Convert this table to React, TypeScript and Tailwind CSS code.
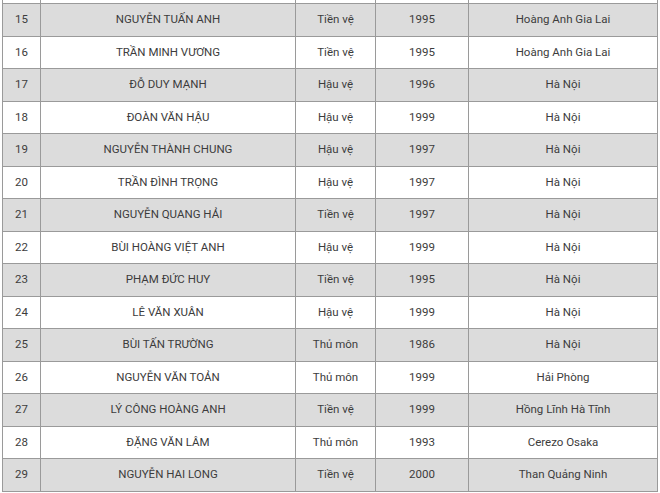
import React from 'react';

const rows: [number, string, string, number, string][] = [
  [14, '', '', 0, ''],
  [15, 'NGUYỄN TUẤN ANH', 'Tiền vệ', 1995, 'Hoàng Anh Gia Lai'],
  [16, 'TRẦN MINH VƯƠNG', 'Tiền vệ', 1995, 'Hoàng Anh Gia Lai'],
  [17, 'ĐỖ DUY MẠNH', 'Hậu vệ', 1996, 'Hà Nội'],
  [18, 'ĐOÀN VĂN HẬU', 'Hậu vệ', 1999, 'Hà Nội'],
  [19, 'NGUYỄN THÀNH CHUNG', 'Hậu vệ', 1997, 'Hà Nội'],
  [20, 'TRẦN ĐÌNH TRỌNG', 'Hậu vệ', 1997, 'Hà Nội'],
  [21, 'NGUYỄN QUANG HẢI', 'Tiền vệ', 1997, 'Hà Nội'],
  [22, 'BÙI HOÀNG VIỆT ANH', 'Hậu vệ', 1999, 'Hà Nội'],
  [23, 'PHẠM ĐỨC HUY', 'Tiền vệ', 1995, 'Hà Nội'],
  [24, 'LÊ VĂN XUÂN', 'Hậu vệ', 1999, 'Hà Nội'],
  [25, 'BÙI TẤN TRƯỜNG', 'Thủ môn', 1986, 'Hà Nội'],
  [26, 'NGUYỄN VĂN TOẢN', 'Thủ môn', 1999, 'Hải Phòng'],
  [27, 'LÝ CÔNG HOÀNG ANH', 'Tiền vệ', 1999, 'Hồng Lĩnh Hà Tĩnh'],
  [28, 'ĐẶNG VĂN LÂM', 'Thủ môn', 1993, 'Cerezo Osaka'],
  [29, 'NGUYỄN HAI LONG', 'Tiền vệ', 2000, 'Than Quảng Ninh'],
];

export default function App() {
  return (
    <div className="w-[660px] h-[493px] overflow-hidden bg-white">
      <div className="pl-[2px] -mt-[29.5px]">
        <table
          className="table-fixed border-collapse w-[655px] text-[11.5px] text-[#3c3c3c] text-center"
          style={{ fontFamily: 'Roboto, "Noto Sans", sans-serif' }}
        >
          <colgroup>
            <col className="w-[38px]" />
            <col className="w-[255px]" />
            <col className="w-[80px]" />
            <col className="w-[93px]" />
            <col className="w-[189px]" />
          </colgroup>
          <tbody>
            {rows.map(([n, name, pos, year, club]) => (
              <tr key={n} className={n % 2 === 1 ? 'bg-[#dcdcdc]' : 'bg-white'}>
                <td className="h-[32.5px] border border-[#9a9a9a] p-0">{name ? n : ''}</td>
                <td className="border border-[#9a9a9a] p-0">{name}</td>
                <td className="border border-[#9a9a9a] p-0">{pos}</td>
                <td className="border border-[#9a9a9a] p-0">{year || ''}</td>
                <td className="border border-[#9a9a9a] p-0">{club}</td>
              </tr>
            ))}
          </tbody>
        </table>
      </div>
    </div>
  );
}
